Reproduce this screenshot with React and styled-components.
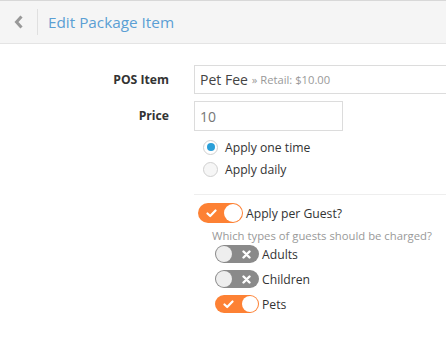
import React from "react";
import styled, { createGlobalStyle } from "styled-components";

const Global = createGlobalStyle`
  body {
    margin: 0;
    background: #fff;
    font-family: "Open Sans", "Liberation Sans", sans-serif;
    color: #333;
    overflow: hidden;
  }
`;

const Header = styled.div`
  height: 42px;
  display: flex;
  align-items: center;
  background: #f5f5f5;
  border-top: 1px solid #d8d8d8;
  border-bottom: 1px solid #e4e4e4;
`;

const Back = styled.div`
  width: 37px;
  height: 26px;
  display: flex;
  align-items: center;
  justify-content: center;
  border-right: 1px solid #e0e0e0;
`;

const Title = styled.h1`
  margin: 0 0 0 10px;
  font-size: 15.3px;
  font-weight: 400;
  color: #5b9fd4;
`;

const Form = styled.div`
  padding-top: 21px;
`;

const Row = styled.div`
  display: grid;
  grid-template-columns: 169px 1fr;
  column-gap: 25px;
  align-items: center;
  margin-bottom: ${(p) => p.gap || 6}px;
`;

const Label = styled.label`
  text-align: right;
  font-size: 12.2px;
  font-weight: 700;
  color: #333;
  align-self: start;
  padding-top: ${(p) => p.top || 6}px;
`;

const Input = styled.div`
  box-sizing: border-box;
  width: ${(p) => p.w}px;
  height: ${(p) => p.h}px;
  border: 1px solid #dcdcdc;
  padding: 0 5px;
  display: flex;
  align-items: center;
  font-size: 14px;
  color: ${(p) => (p.muted ? "#777" : "#444")};
  white-space: nowrap;
`;

const Hint = styled.span`
  font-size: 11.2px;
  color: #999;
  margin-left: 4px;
`;

const Options = styled.div`
  padding-left: 9px;
  padding-top: 7px;
  display: flex;
  flex-direction: column;
  gap: 4px;
`;

const RadioRow = styled.div`
  height: 18px;
  display: flex;
  align-items: center;
  gap: 7px;
  font-size: 12.2px;
  color: #333;
`;

const Radio = styled.span`
  box-sizing: border-box;
  width: 15px;
  height: 15px;
  border-radius: 50%;
  border: 1px solid #d0d0d0;
  background: ${(p) => (p.on ? "#fff" : "#f6f6f6")};
  display: flex;
  align-items: center;
  justify-content: center;
  &::after {
    content: "";
    width: 8px;
    height: 8px;
    border-radius: 50%;
    background: ${(p) => (p.on ? "#2b9fd8" : "transparent")};
  }
`;

const Divider = styled.div`
  border-top: 1px solid #eee;
  margin-top: 16px;
`;

const Guest = styled.div`
  padding-top: 8px;
  padding-left: 4px;
`;

const ToggleRow = styled.div`
  display: flex;
  align-items: center;
  gap: 3px;
  font-size: 12.2px;
  color: #333;
`;

const Track = styled.span`
  box-sizing: border-box;
  position: relative;
  width: ${(p) => (p.big ? 45 : 44)}px;
  height: ${(p) => (p.big ? 20 : 18)}px;
  border-radius: 10px;
  background: ${(p) => (p.on ? "#fd8134" : "#8a8a8a")};
  display: flex;
  align-items: center;
  justify-content: ${(p) => (p.on ? "flex-start" : "flex-end")};
  padding: 0 ${(p) => (p.on ? 0 : 8)}px 0 ${(p) => (p.on ? 8 : 0)}px;
`;

const Knob = styled.span`
  box-sizing: border-box;
  position: absolute;
  top: 1px;
  ${(p) => (p.on ? "right: 1px;" : "left: 1px;")}
  width: ${(p) => (p.big ? 18 : 16)}px;
  height: ${(p) => (p.big ? 18 : 16)}px;
  border-radius: 50%;
  background: ${(p) => (p.on ? "#fff" : "#eee")};
`;

const Question = styled.div`
  font-size: 11.3px;
  line-height: 16px;
  color: #999;
  padding-left: 14px;
  margin: 5px 0 1px;
`;

const SubList = styled.div`
  padding-left: 17px;
  display: flex;
  flex-direction: column;
  gap: 7px;
`;

const Check = () => (
  <svg width="11" height="9" viewBox="0 0 11 9">
    <path d="M1.5 4.5 L4.2 7 L9.5 1.5" fill="none" stroke="#fff" strokeWidth="2.2" strokeLinecap="round" strokeLinejoin="round" />
  </svg>
);

const Cross = () => (
  <svg width="9" height="9" viewBox="0 0 9 9">
    <path d="M1.5 1.5 L7.5 7.5 M7.5 1.5 L1.5 7.5" fill="none" stroke="#fff" strokeWidth="2.4" strokeLinecap="round" />
  </svg>
);

function Toggle({ on, big }) {
  return (
    <Track on={on} big={big}>
      {on ? <Check /> : <Cross />}
      <Knob on={on} big={big} />
    </Track>
  );
}

export default function App() {
  return (
    <>
      <Global />
      <Header>
        <Back>
          <svg width="10" height="14" viewBox="0 0 10 14">
            <path d="M7.5 1.5 L2.5 7 L7.5 12.5" fill="none" stroke="#999" strokeWidth="3" />
          </svg>
        </Back>
        <Title>Edit Package Item</Title>
      </Header>
      <Form>
        <Row gap={7}>
          <Label top={6}>POS Item</Label>
          <Input w={290} h={29}>
            Pet Fee<Hint>» Retail: $10.00</Hint>
          </Input>
        </Row>
        <Row gap={0}>
          <Label top={6}>Price</Label>
          <div>
            <Input w={149} h={30} muted>10</Input>
            <Options>
              <RadioRow><Radio on />Apply one time</RadioRow>
              <RadioRow><Radio />Apply daily</RadioRow>
            </Options>
            <Divider />
            <Guest>
              <ToggleRow>
                <Toggle on big />
                Apply per Guest?
              </ToggleRow>
              <Question>Which types of guests should be charged?</Question>
              <SubList>
                <ToggleRow><Toggle />Adults</ToggleRow>
                <ToggleRow><Toggle />Children</ToggleRow>
                <ToggleRow><Toggle on />Pets</ToggleRow>
              </SubList>
            </Guest>
          </div>
        </Row>
      </Form>
    </>
  );
}
